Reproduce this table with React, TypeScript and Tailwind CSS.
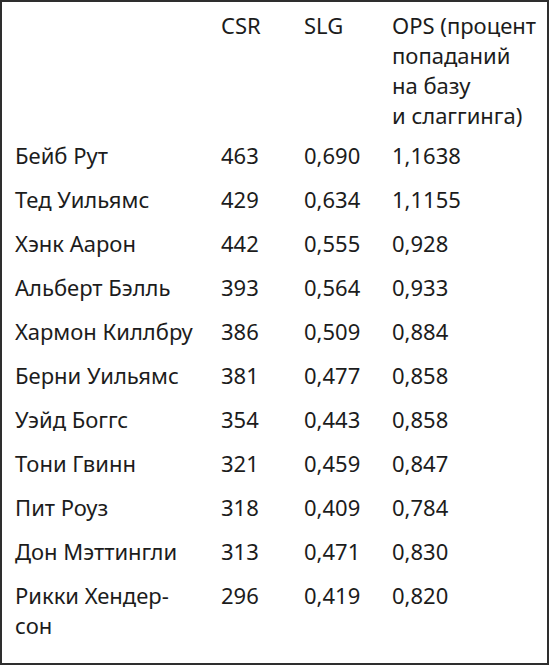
import React from "react";

const rows: [string, string, string, string][] = [
  ["Бейб Рут", "463", "0,690", "1,1638"],
  ["Тед Уильямс", "429", "0,634", "1,1155"],
  ["Хэнк Аарон", "442", "0,555", "0,928"],
  ["Альберт Бэлль", "393", "0,564", "0,933"],
  ["Хармон Киллбру", "386", "0,509", "0,884"],
  ["Берни Уильямс", "381", "0,477", "0,858"],
  ["Уэйд Боггс", "354", "0,443", "0,858"],
  ["Тони Гвинн", "321", "0,459", "0,847"],
  ["Пит Роуз", "318", "0,409", "0,784"],
  ["Дон Мэттингли", "313", "0,471", "0,830"],
  ["Рикки Хендер-\nсон", "296", "0,419", "0,820"],
];

export default function App() {
  return (
    <div
      className="w-[549px] h-[665px] bg-white border-[2px] border-[#2e2e2e] text-[#1c1c1c] text-[22px] leading-[30px] pl-[13px] pt-[1px]"
      style={{ fontFamily: '"Noto Sans", sans-serif' }}
    >
      <div className="grid grid-cols-[206px_83px_88px_1fr]">
        <div className="pt-[7px] pb-[3px]"></div>
        <div className="pt-[7px] pb-[3px]">CSR</div>
        <div className="pt-[7px] pb-[3px]">SLG</div>
        <div className="pt-[7px] pb-[3px]">
          OPS (процент
          <br />
          попаданий
          <br />
          на базу
          <br />и слаггинга)
        </div>
        {rows.map((r, i) => (
          <React.Fragment key={i}>
            <div className="py-[7px] whitespace-pre-line">{r[0]}</div>
            <div className="py-[7px]">{r[1]}</div>
            <div className="py-[7px]">{r[2]}</div>
            <div className="py-[7px]">{r[3]}</div>
          </React.Fragment>
        ))}
      </div>
    </div>
  );
}
